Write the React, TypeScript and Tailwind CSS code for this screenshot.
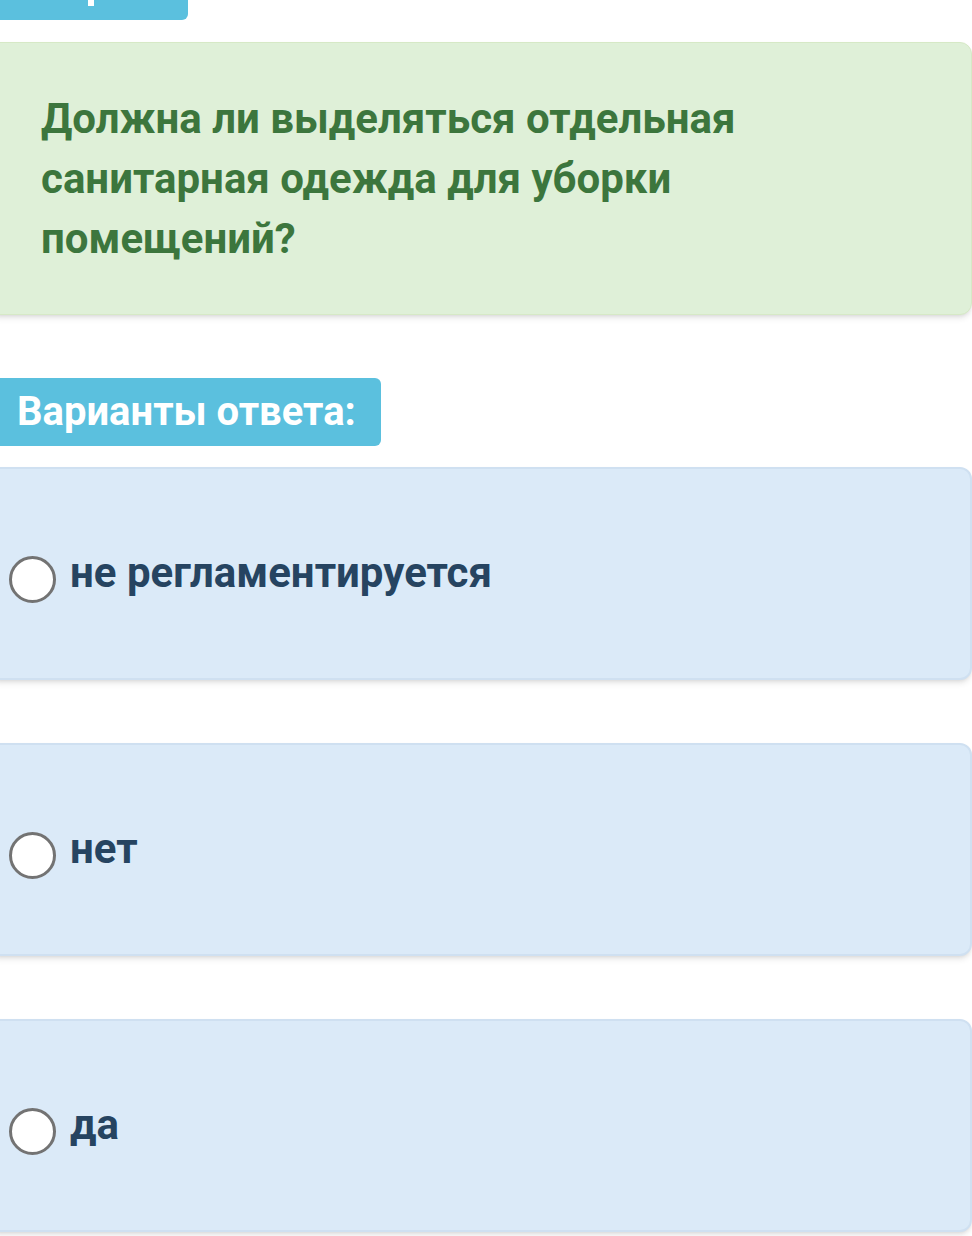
import { useState } from "react";

const answers = ["не регламентируется", "нет", "да"];

export default function App() {
  const [picked, setPicked] = useState<number | null>(null);

  return (
    <div className="min-h-[1236px] w-[972px] overflow-hidden bg-white font-['Roboto',sans-serif]">
      {/* cut-off header tab */}
      <div className="relative h-[20px] w-[188px] rounded-br-md bg-[#5bc0de]">
        <span className="absolute left-[88px] top-0 h-[6px] w-[6px] bg-white" />
      </div>

      {/* question */}
      <div className="-ml-3 mt-[22px] rounded-xl border border-[#d6e9c6] bg-[#dff0d8] pb-[45px] pl-[52px] pr-10 pt-[46px] shadow-md">
        <p className="max-w-[760px] text-[42px] font-bold leading-[60px] text-[#3c763d]">
          Должна ли выделяться отдельная санитарная одежда для уборки помещений?
        </p>
      </div>

      <div className="mt-[63px] inline-block rounded-r-md bg-[#5bc0de] py-[5px] pl-[17px] pr-[25px] text-[40px] font-bold leading-[58px] text-white">
        Варианты ответа:
      </div>

      <div className="mt-[21px] flex flex-col gap-[63px]">
        {answers.map((a, i) => (
          <label
            key={a}
            className="-ml-3 flex h-[213px] cursor-pointer items-start gap-[14px] rounded-xl border-2 border-[#cfe0f1] bg-[#dbeaf8] pl-[19px] pt-[87px] shadow-md"
          >
            <span
              onClick={() => setPicked(i)}
              className="flex h-[47px] w-[47px] shrink-0 items-center justify-center rounded-full border-[3px] border-[#737373] bg-white"
            >
              {picked === i && <span className="h-6 w-6 rounded-full bg-[#337ab7]" />}
            </span>
            <span className="-mt-[13px] text-[42px] font-bold leading-[60px] text-[#264461]">{a}</span>
          </label>
        ))}
      </div>
    </div>
  );
}
